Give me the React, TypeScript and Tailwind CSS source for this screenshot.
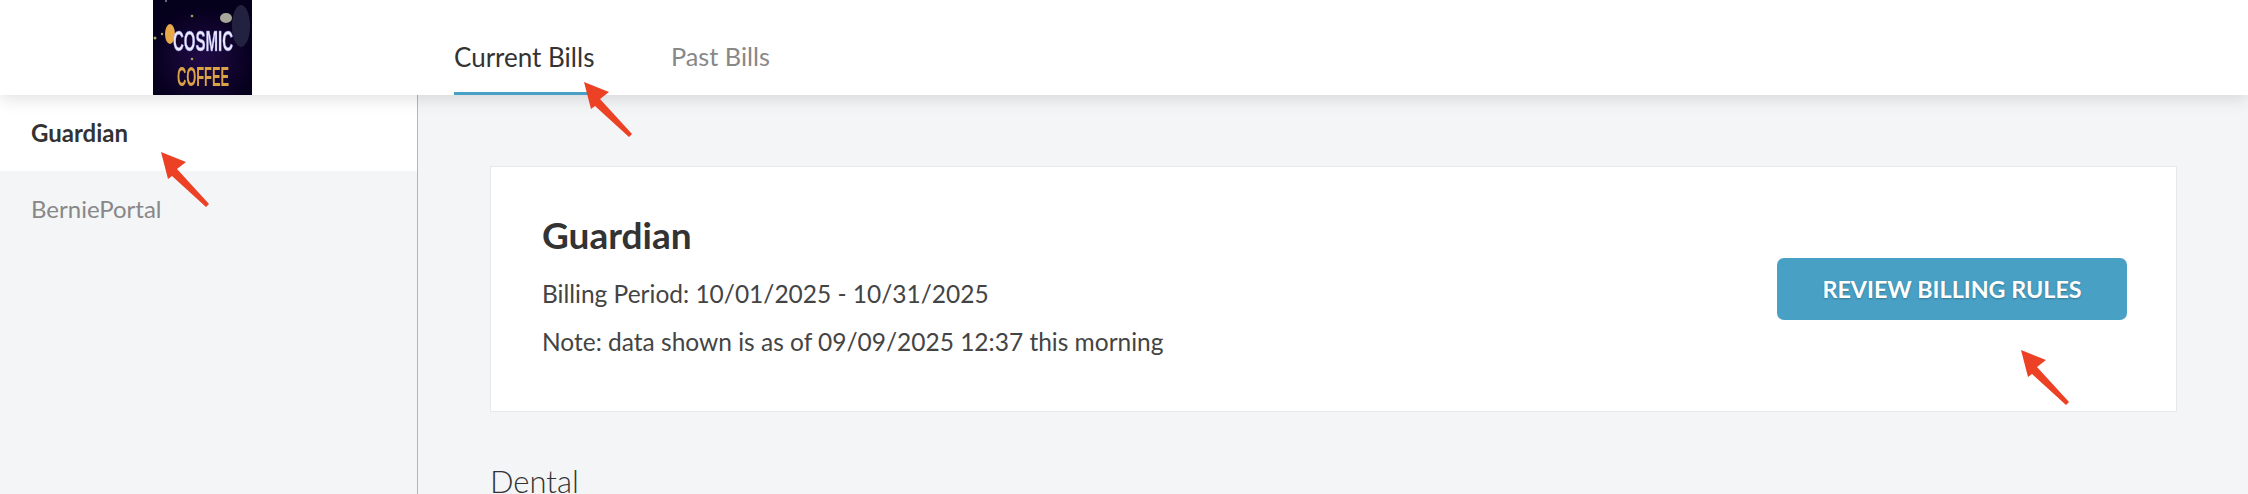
import React from 'react';

const font = { fontFamily: 'Lato, "Open Sans", sans-serif' };

// Cosmic Coffee logo, a small blurry raster in the original
const Logo = () => (
  <svg width="99" height="95" viewBox="0 0 99 95" className="block shrink-0">
    <defs>
      <radialGradient id="space" cx="50%" cy="62%" r="55%">
        <stop offset="0%" stopColor="#210a45" />
        <stop offset="100%" stopColor="#05001c" />
      </radialGradient>
      <filter id="soft">
        <feGaussianBlur stdDeviation="0.6" />
      </filter>
    </defs>
    <rect width="99" height="95" fill="url(#space)" />
    <g filter="url(#soft)">
      <ellipse cx="88" cy="26" rx="9" ry="21" fill="#24233f" />
      <ellipse cx="73" cy="18" rx="6" ry="5" fill="#a9a79a" />
      <ellipse cx="17" cy="34" rx="5" ry="10" fill="#eaa94a" />
      <circle cx="13" cy="1" r="1" fill="#8a8aa0" />
      <circle cx="39" cy="16" r="1.3" fill="#a89a50" />
      <circle cx="2" cy="38" r="1.5" fill="#a8a860" />
      <circle cx="9" cy="34" r="1.2" fill="#a8a860" />
      <circle cx="39" cy="59" r="1.3" fill="#a89a50" />
      <text transform="translate(50 51) scale(0.5 1)" textAnchor="middle" fontFamily="Liberation Sans, sans-serif" fontWeight="700" fontSize="30" fill="#e8e8ff" stroke="#8f8fe0" strokeWidth="0.5">COSMIC</text>
      <text transform="translate(50 86) scale(0.46 1)" textAnchor="middle" fontFamily="Liberation Sans, sans-serif" fontWeight="700" fontSize="28" fill="#dba345">COFFEE</text>
    </g>
  </svg>
);

const Arrow = ({ x, y }: { x: number; y: number }) => (
  <svg width="52" height="58" viewBox="0 0 52 58" className="absolute pointer-events-none" style={{ left: x, top: y }}>
    <path d="M0 0 L25 10 L16 17 L48 52 L45 55 L11 24 L7 27 Z" fill="#ec4124" />
  </svg>
);

const App: React.FC = () => {
  return (
    <div className="relative h-[494px] w-[2248px] overflow-hidden bg-[#f4f5f7]" style={font}>
      {/* Header */}
      <header className="relative z-10 flex h-[95px] bg-white shadow-[0_4px_16px_rgba(0,0,0,0.12)]">
        <div className="w-[454px] shrink-0 pl-[153px]">
          <Logo />
        </div>
        <nav className="flex gap-[78px]">
          <div className="flex h-[95px] w-[139px] items-center whitespace-nowrap border-b-[3px] border-[#48a0c5] pt-[22px] text-[26px] text-[#333333]">
            Current Bills
          </div>
          <div className="flex h-[95px] items-center whitespace-nowrap pb-[3px] pt-[22px] text-[25.3px] text-[#888888]">Past Bills</div>
        </nav>
      </header>

      <div className="flex h-[399px]">
        {/* Sidebar */}
        <aside className="w-[418px] shrink-0 border-r border-[#b3b5b8]">
          <div className="flex h-[76px] items-center bg-white pl-[31px] text-[24px] font-bold text-[#333333]">Guardian</div>
          <div className="flex h-[76px] items-center pl-[31px] text-[24px] text-[#888888]">BerniePortal</div>
        </aside>

        {/* Main */}
        <main className="flex-1 pl-[72px] pr-[71px] pt-[71px]">
          <section className="flex h-[246px] items-center justify-between border border-[#e6e8ea] bg-white pl-[51px] pr-[49px]">
            <div className="pt-[3px]">
              <h2 className="text-[37px] font-bold leading-[40px] text-[#333333]">Guardian</h2>
              <p className="mt-[15px] text-[24.5px] leading-[48px] text-[#444444]">Billing Period: 10/01/2025 - 10/31/2025</p>
              <p className="text-[24.5px] leading-[48px] text-[#444444]">Note: data shown is as of 09/09/2025 12:37 this morning</p>
            </div>
            <button className="h-[62px] w-[350px] rounded-[7px] bg-[#48a0c5] text-[23.3px] font-bold text-white [text-shadow:0_1px_2px_rgba(0,0,0,0.25)]">
              REVIEW BILLING RULES
            </button>
          </section>
          <h3 className="mt-[49px] text-[31px] font-light leading-[40px] text-[#333333]">Dental</h3>
        </main>
      </div>

      {/* Annotation arrows */}
      <div className="absolute inset-0 z-20 pointer-events-none">
        <Arrow x={161} y={152} />
        <Arrow x={584} y={82} />
        <Arrow x={2021} y={350} />
      </div>
    </div>
  );
};

export default App;
